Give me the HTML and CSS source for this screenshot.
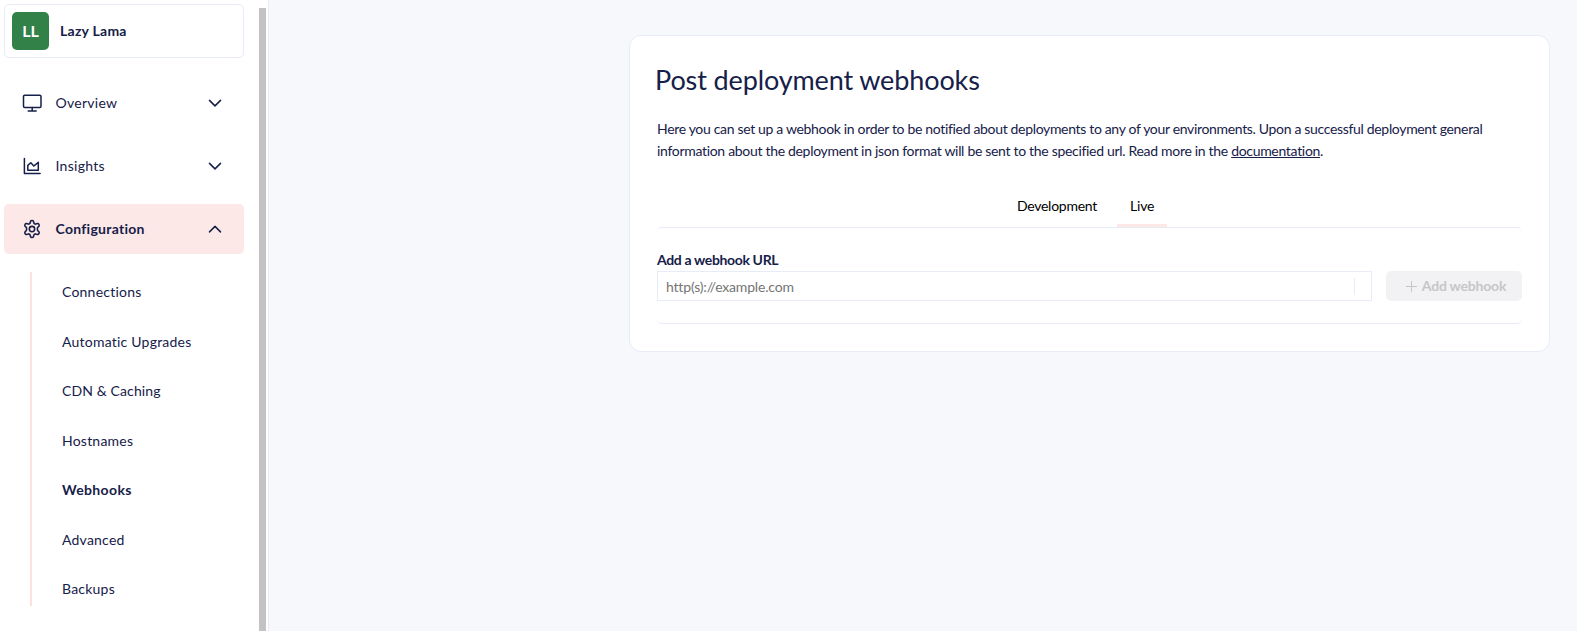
FILE: index.html
```html
<!DOCTYPE html>
<html lang="en">
<head>
<meta charset="utf-8">
<title>Post deployment webhooks</title>
<link rel="stylesheet" href="styles.css">
</head>
<body>
<div class="app">
  <aside class="sidebar">
    <div class="side-content">
      <div class="project"><span class="avatar">LL</span><span class="project-name">Lazy Lama</span></div>
      <nav class="nav">
        <a class="nav-item">
          <svg class="nav-icon" viewBox="0 0 20 20"><rect x="1.500" y="2.300" width="17.500" height="12.200" rx="1.200"/><path d="M10.200 14.500v3.500M6.200 18h8"/></svg>
          <span class="nav-label">Overview</span>
          <svg class="chevron" viewBox="0 0 14 14"><path d="M1.500 4.400 7 9.900l5.500-5.500"/></svg>
        </a>
        <a class="nav-item">
          <svg class="nav-icon" viewBox="0 0 20 20"><path d="M2.400 2.600v15h15.700M5.800 14.300V9.400l3-2.600 3 3.200 4.500-3.700v8z"/></svg>
          <span class="nav-label">Insights</span>
          <svg class="chevron" viewBox="0 0 14 14"><path d="M1.500 4.400 7 9.900l5.500-5.500"/></svg>
        </a>
        <a class="nav-item active">
          <svg class="nav-icon" viewBox="0 0 24 24"><g stroke-width="1.900"><path d="M10.300 2.700C10.600 1.500 13.400 1.500 13.700 2.700L14.300 4.900C14.500 5.500 15.800 6.300 16.400 6.100L18.700 5.500C19.900 5.200 21.200 7.600 20.400 8.500L18.800 10.200C18.400 10.700 18.400 13.300 18.800 13.800L20.400 15.500C21.200 16.400 19.900 18.800 18.700 18.500L16.400 17.900C15.800 17.700 14.500 18.500 14.300 19.100L13.700 21.300C13.400 22.500 10.600 22.500 10.300 21.300L9.700 19.100C9.500 18.500 8.200 17.700 7.600 17.900L5.300 18.500C4.100 18.800 2.800 16.400 3.600 15.500L5.200 13.800C5.600 13.300 5.600 10.700 5.200 10.200L3.600 8.500C2.800 7.600 4.100 5.200 5.300 5.500L7.600 6.100C8.200 6.300 9.500 5.500 9.700 4.900Z"/><circle cx="12" cy="12" r="3.200"/></g></svg>
          <span class="nav-label">Configuration</span>
          <svg class="chevron" viewBox="0 0 14 14"><path d="M1.500 9.900 7 4.400l5.500 5.500"/></svg>
        </a>
      </nav>
      <ul class="subnav">
        <li>Connections</li>
        <li>Automatic Upgrades</li>
        <li class="tight">CDN &amp; Caching</li>
        <li>Hostnames</li>
        <li class="current">Webhooks</li>
        <li>Advanced</li>
        <li>Backups</li>
      </ul>
    </div>
    <div class="scroll-thumb"></div>
  </aside>
  <main class="main">
    <section class="card">
      <h1>Post deployment webhooks</h1>
      <p class="intro">Here you can set up a webhook in order to be notified about deployments to any of your environments. Upon a successful deployment general<br><span class="second">information about the deployment in json format will be sent to the specified url. Read more in the <a class="link">documentation</a>.</span></p>
      <div class="tabs"><span class="tab">Development</span><span class="tab selected">Live</span></div>
      <div class="panel">
        <label class="field-label" for="url">Add a webhook URL</label>
        <div class="row">
          <div class="field"><input id="url" type="text" placeholder="http(s)://example.com"><span class="divider"></span></div>
          <button class="add" disabled><svg class="plus" viewBox="0 0 11 11"><path d="M5.500 0v11M0 5.500h11"/></svg><span>Add webhook</span></button>
        </div>
      </div>
    </section>
  </main>
</div>
</body>
</html>
```
FILE: styles.css
```css
* { box-sizing: border-box; }
body { margin: 0; font-family: Lato, sans-serif; font-size: 14px; color: #162049; background: #fff; }
.app { display: flex; height: 631px; overflow: hidden; background: #f6f8fc; }

.sidebar { display: flex; flex: none; width: 269px; background: #fff; border-right: 1px solid #e8ebf8; }
.side-content { width: 259px; padding: 4px 15px 0 4px; }
.scroll-thumb { width: 7px; margin-top: 8px; background: #c2c2c2; }
.project { display: flex; align-items: center; height: 54px; padding-left: 7px; border: 1px solid #e8ebf8; border-radius: 5px; }
.avatar { display: flex; align-items: center; justify-content: center; width: 37px; height: 38px; padding-bottom: 1px; border-radius: 5px; background: #318148; color: #fff; font-weight: 700; font-size: 16px; }
.project-name { margin-left: 11px; padding-bottom: 2px; font-weight: 700; letter-spacing: .25px; }
.nav { display: flex; flex-direction: column; gap: 13px; margin-top: 20px; }
.nav-item { display: flex; align-items: center; height: 50px; padding: 0 22px 0 18px; border-radius: 5px; letter-spacing: .28px; }
.nav-item.active { background: #fce9e7; font-weight: 700; }
.nav-icon { width: 20px; height: 20px; fill: none; stroke: #162049; stroke-width: 1.5; stroke-linejoin: round; stroke-linecap: round; }
.nav-label { flex: 1; margin-left: 13.5px; padding-bottom: 2px; }
.chevron { width: 14px; height: 14px; fill: none; stroke: #162049; stroke-width: 1.5; stroke-linecap: round; stroke-linejoin: round; }
.subnav { list-style: none; height: 334px; margin: 18px 0 0 26px; padding: 0 0 0 30px; border-left: 2px solid #fde1df; letter-spacing: .22px; }
.subnav li { height: 49.5px; line-height: 49.5px; position: relative; top: -5px; }
.subnav .tight { letter-spacing: .12px; }
.subnav .current { font-weight: 700; letter-spacing: .36px; }

.main { flex: 1; padding: 35px 27px 0 360px; }
.card { height: 317px; padding: 28px 27px 0 26px; background: #fff; border: 1px solid #e8ebf8; border-radius: 12px; }
h1 { margin: 0 0 0 -1px; font-size: 27px; font-weight: 400; line-height: 32px; letter-spacing: -.12px; }
.intro { margin: 22px 0 0 1px; line-height: 22px; white-space: nowrap; letter-spacing: -.33px; }
.second { letter-spacing: -.31px; }
.link { text-decoration: underline; }
.tabs { display: flex; justify-content: center; height: 54px; margin: 11px 7px 0 0; color: #000; letter-spacing: -.25px; }
.tab { padding: 17px 13px 0; line-height: 32px; }
.tab + .tab { margin-left: 7px; }
.tab.selected { border-bottom: 3px solid #fce9e7; border-radius: 2px 2px 0 0; }
.panel { height: 97px; margin-left: 1px; padding-top: 23px; border: solid #e8ebf8; border-width: 1px 0; border-radius: 5px; }
.field-label { display: block; height: 20px; line-height: 18px; font-weight: 700; letter-spacing: -.35px; }
.row { display: flex; gap: 14px; height: 30px; }
.field { display: flex; align-items: center; width: 715px; padding: 0 16px 0 8px; border: 1px solid #e8ebf8; }
.field input { flex: 1; padding: 0; border: 0; outline: 0; background: none; font: inherit; letter-spacing: -.18px; }
.field input::placeholder { color: #757575; }
.divider { width: 1px; height: 17px; background: #e8ebf8; }
.add { display: flex; align-items: center; justify-content: center; gap: 5px; width: 136px; padding: 0 0 1px 4px; border: 0; border-radius: 5px; background: #f2f2f4; color: #c6c6c8; font: inherit; font-weight: 700; letter-spacing: -.2px; }
.plus { width: 11px; height: 11px; margin-top: 2px; stroke: #c6c6c8; stroke-width: 1; }
```
